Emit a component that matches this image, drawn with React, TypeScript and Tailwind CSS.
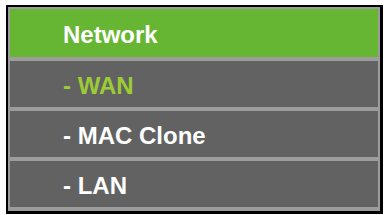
const items = [
  { label: "- WAN", active: true },
  { label: "- MAC Clone", active: false },
  { label: "- LAN", active: false },
];

export default function App() {
  return (
    <div className="h-[215px] w-[384px] bg-white pl-[6px] pt-[5px]">
      <div className="w-[377px] border-t-2 border-l-2 border-r-[3px] border-b-[3px] border-black">
        <div className="border-x-2 border-t-2 border-[#9c9c9c] bg-[#9c9c9c] font-['Liberation_Sans',Arial,sans-serif] font-bold text-[24px] leading-none">
          <div className="flex h-[48px] items-center bg-[#66b634] pl-[53px] pt-[3px] text-white">
            Network
          </div>
          {items.map((item) => (
            <div
              key={item.label}
              className={
                "mt-[4px] flex h-[46px] items-center bg-[#626262] pl-[53px] pt-[3px] " +
                (item.active ? "text-[#9ccc35]" : "text-white")
              }
            >
              {item.label}
            </div>
          ))}
          <div className="h-[4px]" />
        </div>
      </div>
    </div>
  );
}
